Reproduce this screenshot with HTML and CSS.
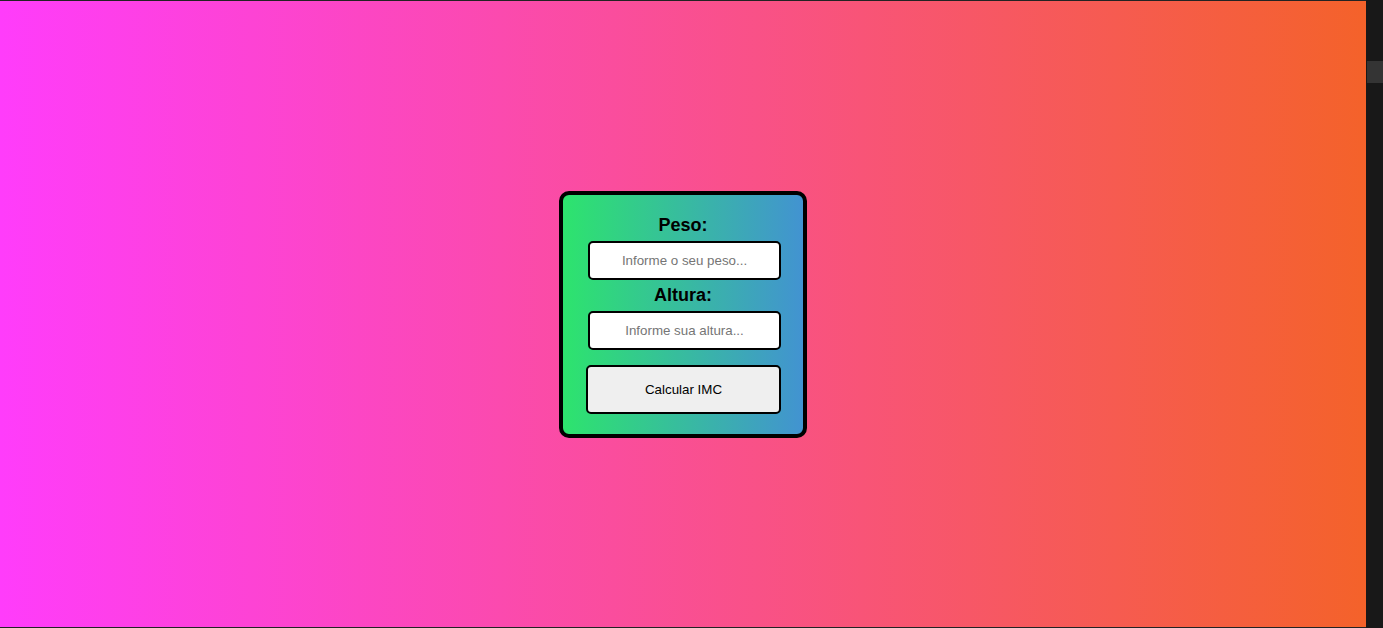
FILE: index.html
```html
<!DOCTYPE html>
<html lang="pt-BR">
<head>
<meta charset="UTF-8">
<title>Calculadora IMC</title>
<link rel="stylesheet" href="styles.css">
</head>
<body>
<main class="page">
  <form class="card">
    <label class="label" for="peso">Peso:</label>
    <input class="field" id="peso" type="text" placeholder="Informe o seu peso...">
    <label class="label" for="altura">Altura:</label>
    <input class="field" id="altura" type="text" placeholder="Informe sua altura...">
    <button class="btn" type="button">Calcular IMC</button>
  </form>
</main>
<div class="scrollbar"><div class="thumb"></div></div>
</body>
</html>
```

FILE: styles.css
```css
html, body {
  margin: 0;
  padding: 0;
  height: 100%;
  overflow: hidden;
}

body {
  display: flex;
  font-family: "Liberation Sans", Arial, sans-serif;
  background: #181818;
}

.page {
  flex: 1;
  height: 628px;
  box-sizing: border-box;
  border-top: 1px solid #232323;
  border-bottom: 1px solid #232323;
  background: linear-gradient(to right, #ff3cfb, #f4622a);
  display: flex;
  align-items: center;
  justify-content: center;
}

.card {
  width: 248px;
  box-sizing: border-box;
  border: 4px solid #000;
  border-radius: 10px;
  background: linear-gradient(to right, #2de46d, #4293d1);
  padding: 15px 22px 20px;
  display: flex;
  flex-direction: column;
  align-items: flex-end;
}

.label {
  align-self: center;
  font-size: 18px;
  font-weight: bold;
  line-height: 20px;
  color: #000;
  margin: 5px 0 6px;
}

.field {
  width: 193px;
  height: 39px;
  box-sizing: border-box;
  border: 2px solid #000;
  border-radius: 5px;
  background: #fff;
  padding: 0 4px;
  font-family: "Liberation Sans", Arial, sans-serif;
  font-size: 13.33px;
  text-align: center;
  color: #000;
  outline: none;
}

.field::placeholder {
  color: #757575;
}

.btn {
  width: 195px;
  height: 49px;
  margin-top: 15px;
  box-sizing: border-box;
  border: 2px solid #000;
  border-radius: 5px;
  background: #efefef;
  font-family: "Liberation Sans", Arial, sans-serif;
  font-size: 13.33px;
  color: #000;
  padding: 0;
}

.scrollbar {
  width: 17px;
  flex: none;
  height: 628px;
  background: #181818;
  display: flex;
  flex-direction: column;
  align-items: flex-end;
}

.thumb {
  width: 16px;
  height: 22px;
  margin-top: 61px;
  background: #343434;
}
```
